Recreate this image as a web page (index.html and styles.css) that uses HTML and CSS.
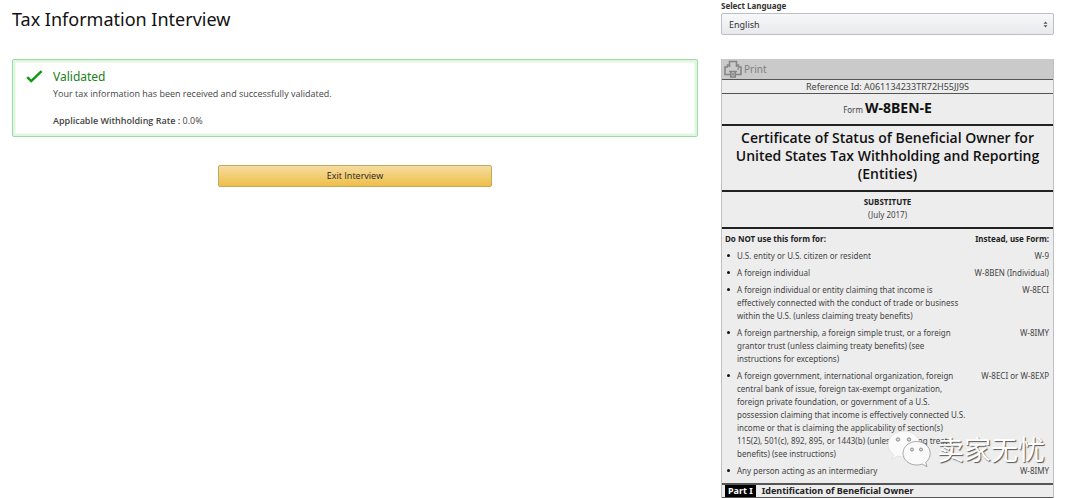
FILE: index.html
```html
<!DOCTYPE html>
<html lang="en">
<head>
<meta charset="utf-8">
<title>Tax Information Interview</title>
<link rel="stylesheet" href="styles.css">
</head>
<body>
<div class="page">
  <main class="main">
    <h1 class="title">Tax Information Interview</h1>
    <section class="alert">
      <svg class="check" viewBox="0 0 17 13" aria-hidden="true"><path d="M1.2 7.2 5.2 11 15.6 1.2" fill="none" stroke="#0a9a12" stroke-width="2.4"/></svg>
      <div>
        <h2 class="alert-title">Validated</h2>
        <p class="alert-text">Your tax information has been received and successfully validated.</p>
        <p class="alert-rate"><strong>Applicable Withholding Rate :</strong> 0.0%</p>
      </div>
    </section>
    <button class="exit" type="button">Exit Interview</button>
  </main>
  <aside class="side">
    <label class="lang-label" for="lang">Select Language</label>
    <div class="select-wrap">
      <select class="lang" id="lang"><option>English</option></select>
      <svg class="arrows" viewBox="0 0 5 7" aria-hidden="true"><path d="M.5 2.8 2.5.4 4.5 2.8zM.5 4.2h4L2.5 6.6z" fill="#555"/></svg>
    </div>
    <article class="form">
      <button class="print" type="button">
        <svg class="printer" viewBox="0 0 18 18" aria-hidden="true"><g fill="none" stroke="#858585" stroke-width="1.6"><path d="M5.500 7V1.500h7V7"/><path d="M5.500 5H3.500v2H1v7.500h5M12.500 5h2v2H17v7.500h-5"/><path d="M5 11.500h8M6.800 11.500V17h4.400v-5.500M9 13v2.500M13.500 9H15"/></g></svg>
        <span>Print</span>
      </button>
      <div class="reference">Reference Id: A061134233TR72H55JJ9S</div>
      <div class="form-name">Form <strong>W-8BEN-E</strong></div>
      <h2 class="form-title">Certificate of Status of Beneficial Owner for<br>United States Tax Withholding and Reporting<br>(Entities)</h2>
      <div class="edition"><strong>SUBSTITUTE</strong><br>(July 2017)</div>
      <table class="uses">
        <thead><tr><th>Do NOT use this form for:</th><th>Instead, use Form:</th></tr></thead>
        <tbody>
          <tr><td>U.S. entity or U.S. citizen or resident</td><td>W-9</td></tr>
          <tr><td>A foreign individual</td><td>W-8BEN (Individual)</td></tr>
          <tr><td>A foreign individual or entity claiming that income is<br>effectively connected with the conduct of trade or business<br>within the U.S. (unless claiming treaty benefits)</td><td>W-8ECI</td></tr>
          <tr><td>A foreign partnership, a foreign simple trust, or a foreign<br>grantor trust (unless claiming treaty benefits) (see<br>instructions for exceptions)</td><td>W-8IMY</td></tr>
          <tr><td>A foreign government, international organization, foreign<br>central bank of issue, foreign tax-exempt organization,<br>foreign private foundation, or government of a U.S.<br>possession claiming that income is effectively connected U.S.<br>income or that is claiming the applicability of section(s)<br>115(2), 501(c), 892, 895, or 1443(b) (unless claiming treaty<br>benefits) (see instructions)</td><td>W-8ECI or W-8EXP</td></tr>
          <tr><td>Any person acting as an intermediary</td><td>W-8IMY</td></tr>
        </tbody>
      </table>
      <h3 class="part"><span class="part-tag">Part I</span>Identification of Beneficial Owner</h3>
      <div class="watermark">
        <svg class="wechat" viewBox="0 0 44 38" aria-hidden="true">
          <g fill="#fafafa" stroke="#ddd" stroke-width=".7"><path d="M17 1C8 1 1 7 1 14.500c0 4 2 7.500 5.500 10L5 29l5.500-3c2 .7 4 1 6.500 1 9 0 16-5.500 16-12.500S26 1 17 1z"/>
          <path stroke="#888" d="M29.500 11.500C22 11.500 16 16.800 16 23.200S22 35 29.500 35c2 0 4-.3 5.700-1l4.800 2.700-1.300-4.300c2.800-2.200 4.500-5.300 4.500-9.200 0-6.400-6.200-11.700-13.700-11.700z"/></g>
          <g fill="#ddd" stroke="#777" stroke-width=".8"><circle cx="11" cy="9.500" r="1.700"/><circle cx="22" cy="9.500" r="1.700"/><circle cx="25" cy="19.500" r="1.500"/><circle cx="34" cy="19.500" r="1.500"/></g>
        </svg>
        <span lang="zh">卖家无忧</span>
      </div>
    </article>
  </aside>
</div>
</body>
</html>
```
FILE: styles.css
```css
* { box-sizing: border-box; }
body { margin: 0; background: #fff; color: #444; font: 8px/13px "Noto Sans", sans-serif; }
h1, h2, h3, p { margin: 0; }
button, select { font: inherit; }
.page { display: grid; grid-template-columns: 686fr 333fr; gap: 23px; padding: 0 26px 0 12px; }

.title { padding-top: 7px; font-size: 18px; line-height: 24px; font-weight: 400; color: #111; }
.alert { display: flex; gap: 10px; margin-top: 28px; padding: 9px 13px 8px; border: 1px solid #a2d9a4; border-radius: 2px; box-shadow: inset 0 0 0 2px #dff7df, inset 0 0 1px 3px #effbef; }
.check { width: 17px; height: 13px; margin-top: 1px; }
.alert-title { font-size: 12px; line-height: 16px; font-weight: 400; color: #1a8020; }
.alert-text { padding-top: 2px; font-family: "Open Sans", sans-serif; font-size: 9px; }
.alert-rate { padding: 14px 0 1px; font-family: "Open Sans", sans-serif; font-size: 9px; }
.alert-rate strong { font-weight: 600; }
.exit { display: block; width: 40%; height: 22px; margin: 28px auto 0; padding: 0 0 1px; border: 1px solid #c2a860; border-radius: 2px; background: linear-gradient(#f6dca0, #eebf48); color: #222; font-family: "Open Sans", sans-serif; font-size: 9px; }

.lang-label { display: block; padding-bottom: 2px; line-height: 11px; font-weight: 700; color: #333; }
.select-wrap { position: relative; }
.lang { display: block; width: 100%; height: 22px; padding: 0 7px; border: 1px solid #bcbfc6; border-radius: 2px; background: linear-gradient(#f7f8fa, #e7e9ec); color: #333; font-size: 9px; appearance: none; }
.arrows { position: absolute; right: 6px; top: 8px; width: 5px; height: 7px; pointer-events: none; }

.form { position: relative; margin-top: 24px; border: solid #c0c0c0; border-width: 0 1px; background: #ededed; text-align: center; }
.print { display: flex; align-items: center; gap: 2px; width: 100%; height: 20px; padding: 0 2px; border: 0; background: #cacaca; color: #808080; font-size: 10px; }
.printer { width: 18px; height: 18px; }
.reference { border: solid #555; border-width: 1px 0; font-size: 9px; }
.form-name { padding: 5px 0; border-bottom: 2px solid #222; line-height: 18px; }
.form-name strong { font-size: 14px; color: #111; }
.form-title { padding: 3px 0 7px; border-bottom: 2px solid #222; font-family: "Open Sans", sans-serif; font-size: 14px; line-height: 18px; font-weight: 600; color: #111; }
.edition { padding: 3px 0 6px; border-bottom: 2px solid #222; }
.edition strong { color: #222; }
.uses { width: 100%; border-collapse: collapse; text-align: left; }
.uses th, .uses td { padding: 2px 4px 2px 3px; vertical-align: top; font-weight: 400; white-space: nowrap; }
.uses th { font-weight: 700; color: #222; padding-top: 3px; }
.uses th:last-child, .uses td:last-child { padding-left: 0; text-align: right; }
.uses td:first-child { position: relative; padding-left: 15px; }
.uses td:first-child::before { content: ""; position: absolute; left: 5px; top: 7px; width: 3px; height: 3px; border-radius: 50%; background: #111; }
.part { display: flex; gap: 6px; margin-top: 4px; padding: 0 3px; border: solid #555; border-width: 2px 0 1px; font-size: 9px; line-height: 12px; color: #222; }
.part-tag { padding: 0 3px; background: #000; color: #fff; }

.watermark { position: absolute; right: 8px; bottom: 30px; display: flex; align-items: center; gap: 6px; color: #fff; font: 27px/38px "Noto Sans CJK SC", sans-serif; text-shadow: 1px 1px 1px #555; }
.wechat { width: 44px; height: 38px; }
```
